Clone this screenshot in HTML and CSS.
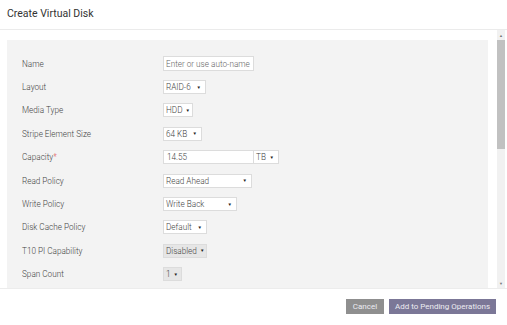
FILE: index.html
```html
<!DOCTYPE html>
<html>
<head>
<meta charset="utf-8">
<link rel="stylesheet" href="styles.css">
</head>
<body>
<div class="dialog">
  <div class="header">Create Virtual Disk</div>
  <div class="body">
    <div class="scroll">
      <div class="panel">
        <div class="row"><span class="label">Name</span><span class="input name placeholder">Enter or use auto-name</span></div>
        <div class="row"><span class="label">Layout</span><span class="select w43">RAID-6<i>▼</i></span></div>
        <div class="row"><span class="label">Media Type</span><span class="select w30">HDD<i>▼</i></span></div>
        <div class="row"><span class="label">Stripe Element Size</span><span class="select w39">64 KB<i>▼</i></span></div>
        <div class="row"><span class="label">Capacity<b class="req">*</b></span><span class="input cap">14.55</span><span class="select unit">TB<i>▼</i></span></div>
        <div class="row"><span class="label">Read Policy</span><span class="select w89">Read Ahead<i>▼</i></span></div>
        <div class="row"><span class="label">Write Policy</span><span class="select w74">Write Back<i>▼</i></span></div>
        <div class="row"><span class="label">Disk Cache Policy</span><span class="select w44">Default<i>▼</i></span></div>
        <div class="row"><span class="label">T10 PI Capability</span><span class="select w44 disabled">Disabled<i>▼</i></span></div>
        <div class="row"><span class="label">Span Count</span><span class="select w19 disabled">1<i>▼</i></span></div>
      </div>
    </div>
    <div class="scrollbar">
      <span class="arrow">▲</span>
      <div class="track"><div class="thumb"></div></div>
      <span class="arrow">▼</span>
    </div>
  </div>
  <div class="footer">
    <button class="btn cancel">Cancel</button>
    <button class="btn add">Add to Pending Operations</button>
  </div>
</div>
</body>
</html>
```
FILE: styles.css
```css
html, body {
  margin: 0;
  padding: 0;
  background: #fff;
}
body {
  font-family: Roboto, "Liberation Sans", sans-serif;
  width: 507px;
  height: 325px;
  overflow: hidden;
}
.dialog {
  display: flex;
  flex-direction: column;
  height: 325px;
}
.header {
  border-bottom: 1px solid #ebebeb;
  padding-left: 7px;
  font-size: 10.5px;
  color: #333;
  display: flex;
  align-items: center;
  box-sizing: border-box;
  height: 30px;
  padding-bottom: 2px;
}
.body {
  display: flex;
  height: 258px;
  border-bottom: 1px solid #ececec;
}
.scroll {
  flex: 0 0 488px;
  overflow: hidden;
  padding: 10px 0 0 7px;
  box-sizing: border-box;
}
.panel {
  background: #f3f3f3;
  padding: 12px 0 30px 15px;
}
.row {
  display: flex;
  align-items: center;
  height: 23.4px;
}
.label {
  flex: 0 0 141px;
  font-size: 8.2px;
  font-weight: 300;
  color: #444;
  white-space: nowrap;
}
.req {
  color: #e0454a;
  font-weight: 300;
}
.input, .select {
  box-sizing: border-box;
  background: #fff;
  border: 1px solid #dcdcdc;
  font-size: 8.2px;
  font-weight: 300;
  color: #444;
  height: 14px;
  display: flex;
  align-items: center;
  padding-left: 3px;
  white-space: nowrap;
  overflow: hidden;
}
.name {
  width: 91px;
  height: 15px;
  padding-left: 2px;
}
.placeholder {
  color: #666;
}
.cap {
  width: 91px;
}
.select {
  justify-content: space-between;
  padding-right: 4px;
  padding-left: 2px;
}
.select i {
  font-style: normal;
  font-size: 4.5px;
  color: #222;
  margin-left: 3px;
}
.unit { width: 25px; border-left: none; }
.w43 { width: 43px; }
.w30 { width: 30px; }
.w39 { width: 39px; }
.w89 { width: 89px; }
.w74 { width: 74px; }
.w44 { width: 44px; }
.w19 { width: 19px; }
.disabled {
  background: #e6e6e6;
}
.scrollbar {
  margin-left: 9px;
  width: 8px;
  background: #f1f1f1;
  display: flex;
  flex-direction: column;
  align-items: center;
}
.arrow {
  font-size: 4px;
  color: #777;
  height: 10px;
  display: flex;
  align-items: center;
}
.track {
  flex: 1;
  width: 100%;
}
.thumb {
  height: 109px;
  background: #c1c1c1;
}
.footer {
  flex: 1;
  display: flex;
  justify-content: flex-end;
  align-items: center;
  gap: 5px;
  padding-right: 11px;
  padding-bottom: 2px;
}
.btn {
  border: none;
  height: 15px;
  font-family: Roboto, "Liberation Sans", sans-serif;
  font-size: 8px;
  color: #ececf2;
  padding: 0;
}
.cancel {
  width: 38px;
  background: #8f8f8f;
}
.add {
  width: 107px;
  background: #7b7797;
}
```
